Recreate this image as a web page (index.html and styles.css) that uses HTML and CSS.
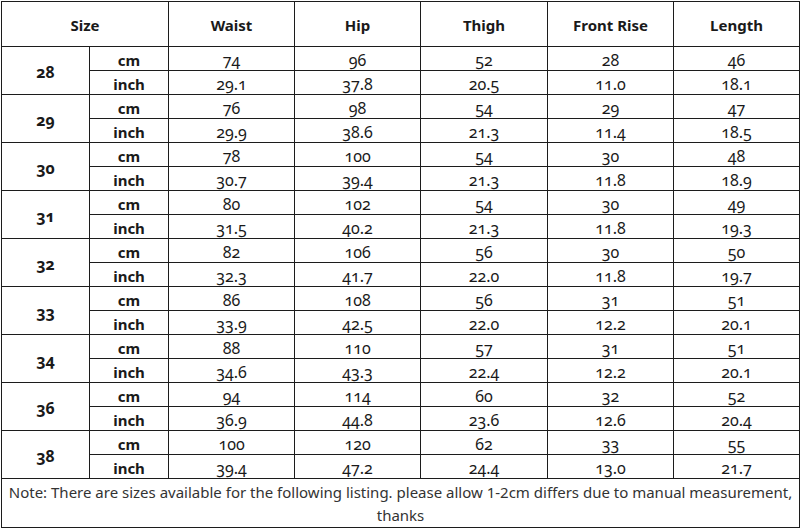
FILE: index.html
```html
<!DOCTYPE html>
<html>
<head>
<meta charset="utf-8">
<link rel="stylesheet" href="styles.css">
</head>
<body>
<div class="sheet">
<table class="chart">
<colgroup>
<col class="c-size"><col class="c-unit"><col class="c-m"><col class="c-m"><col class="c-m3"><col class="c-m"><col class="c-m6">
</colgroup>
<thead>
<tr class="head"><th colspan="2">Size</th><th>Waist</th><th>Hip</th><th>Thigh</th><th>Front Rise</th><th>Length</th></tr>
</thead>
<tbody>
<tr><td class="size" rowspan="2">28</td><td class="unit">cm</td><td>74</td><td>96</td><td>52</td><td>28</td><td>46</td></tr>
<tr><td class="unit">inch</td><td>29.1</td><td>37.8</td><td>20.5</td><td>11.0</td><td>18.1</td></tr>
<tr><td class="size" rowspan="2">29</td><td class="unit">cm</td><td>76</td><td>98</td><td>54</td><td>29</td><td>47</td></tr>
<tr><td class="unit">inch</td><td>29.9</td><td>38.6</td><td>21.3</td><td>11.4</td><td>18.5</td></tr>
<tr><td class="size" rowspan="2">30</td><td class="unit">cm</td><td>78</td><td>100</td><td>54</td><td>30</td><td>48</td></tr>
<tr><td class="unit">inch</td><td>30.7</td><td>39.4</td><td>21.3</td><td>11.8</td><td>18.9</td></tr>
<tr><td class="size" rowspan="2">31</td><td class="unit">cm</td><td>80</td><td>102</td><td>54</td><td>30</td><td>49</td></tr>
<tr><td class="unit">inch</td><td>31.5</td><td>40.2</td><td>21.3</td><td>11.8</td><td>19.3</td></tr>
<tr><td class="size" rowspan="2">32</td><td class="unit">cm</td><td>82</td><td>106</td><td>56</td><td>30</td><td>50</td></tr>
<tr><td class="unit">inch</td><td>32.3</td><td>41.7</td><td>22.0</td><td>11.8</td><td>19.7</td></tr>
<tr><td class="size" rowspan="2">33</td><td class="unit">cm</td><td>86</td><td>108</td><td>56</td><td>31</td><td>51</td></tr>
<tr><td class="unit">inch</td><td>33.9</td><td>42.5</td><td>22.0</td><td>12.2</td><td>20.1</td></tr>
<tr><td class="size" rowspan="2">34</td><td class="unit">cm</td><td>88</td><td>110</td><td>57</td><td>31</td><td>51</td></tr>
<tr><td class="unit">inch</td><td>34.6</td><td>43.3</td><td>22.4</td><td>12.2</td><td>20.1</td></tr>
<tr><td class="size" rowspan="2">36</td><td class="unit">cm</td><td>94</td><td>114</td><td>60</td><td>32</td><td>52</td></tr>
<tr><td class="unit">inch</td><td>36.9</td><td>44.8</td><td>23.6</td><td>12.6</td><td>20.4</td></tr>
<tr><td class="size" rowspan="2">38</td><td class="unit">cm</td><td>100</td><td>120</td><td>62</td><td>33</td><td>55</td></tr>
<tr><td class="unit">inch</td><td>39.4</td><td>47.2</td><td>24.4</td><td>13.0</td><td>21.7</td></tr>
<tr class="note-row"><td class="note" colspan="7">Note: There are sizes available for the following listing. please allow 1-2cm differs due to manual measurement, thanks</td></tr>
</tbody>
</table>
</div>
</body>
</html>
```
FILE: styles.css
```css
html, body {
  margin: 0;
  padding: 0;
  background: #ffffff;
}
.sheet {
  width: 800px;
  height: 528px;
  padding: 1px 0 0 1px;
  box-sizing: border-box;
  overflow: hidden;
}
.chart {
  border-collapse: collapse;
  table-layout: fixed;
  width: 798px;
  font-family: "Noto Sans", "DejaVu Sans", sans-serif;
  font-variant-numeric: oldstyle-nums;
  color: #1a1a1a;
}
.c-size { width: 88px; }
.c-unit { width: 79px; }
.c-m { width: 126px; }
.c-m3 { width: 127px; }
.c-m6 { width: 126px; }
.chart th, .chart td {
  border: 1px solid #1c1c1c;
  padding: 0;
  text-align: center;
  overflow: hidden;
  white-space: nowrap;
}
.chart th {
  height: 43px;
  font-size: 15px;
  font-weight: 700;
  padding-top: 1px;
}
.chart td {
  height: 20px;
  font-size: 16px;
  line-height: 20px;
  padding-top: 3px;
}
.chart td.size {
  font-weight: 700;
  font-size: 16px;
  padding-top: 4px;
  height: 43px;
  line-height: 43px;
}
.chart td.unit {
  font-weight: 700;
  font-size: 15px;
}
.chart td.note {
  height: 46px;
  white-space: normal;
  font-size: 15px;
  line-height: 23px;
  color: #333;
  padding: 2px 2px 0;
  font-variant-numeric: normal;
}
```
